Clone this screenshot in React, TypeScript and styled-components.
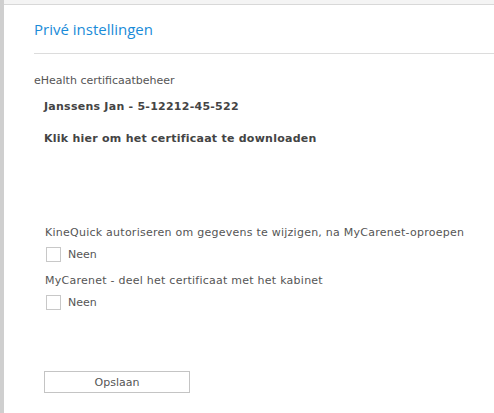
import styled, { createGlobalStyle } from 'styled-components';

//== global ==//
const GlobalStyle = createGlobalStyle`
    html, body {
        margin: 0;
        padding: 0;
        background: #f4f4f4;
    }
    body {
        font-family: "DejaVu Sans", Verdana, sans-serif;
        font-size: 11px;
        color: #555;
    }
`;

//== style ==//
const Page = styled.div`
    min-height: 413px;
    border-left: 4px solid #cfcfcf;
    padding-top: 4px;
    box-sizing: border-box;
    display: flex;
    flex-direction: column;
`;

const Panel = styled.div`
    flex: 1;
    background: #ffffff;
    border-top: 1px solid #d8d8d8;
    padding-left: 30px;
    padding-bottom: 20px;
`;

const Header = styled.div`
    height: 48px;
    display: flex;
    align-items: center;
    border-bottom: 1px solid #dcdcdc;
`;

const Title = styled.h1`
    margin: 0;
    font-family: "Open Sans", "Liberation Sans", sans-serif;
    font-size: 15px;
    font-weight: 400;
    color: #1a8bd8;
`;

const Section = styled.div`
    display: flex;
    flex-direction: column;
`;

const SectionTitle = styled.div`
    margin-top: 20px;
    line-height: 14px;
`;

const Label = styled.div<{ top?: number }>`
    margin-top: ${(p) => p.top ?? 0}px;
    padding-left: 11px;
    line-height: 14px;
    letter-spacing: 0.25px;
`;

const Strong = styled.div`
    margin-top: 12px;
    padding-left: 10px;
    line-height: 14px;
    font-weight: bold;
    letter-spacing: 0.25px;
    color: #444;
`;

const DownloadLink = styled.a`
    margin-top: 18px;
    padding-left: 10px;
    line-height: 14px;
    font-weight: bold;
    letter-spacing: 0.25px;
    color: #444;
    text-decoration: none;
    cursor: pointer;
`;

const CheckRow = styled.label`
    display: flex;
    align-items: center;
    gap: 7px;
    margin-top: 7px;
    padding-left: 12px;
    height: 14px;
`;

const Box = styled.span`
    width: 13px;
    height: 13px;
    border: 1px solid #c8c8c8;
    background: #fff;
    display: inline-block;
`;

const SaveButton = styled.button`
    margin-top: 62px;
    margin-left: 10px;
    width: 146px;
    height: 22px;
    background: #fff;
    border: 1px solid #c4c4c4;
    font-family: "DejaVu Sans", Verdana, sans-serif;
    font-size: 11px;
    color: #555;
    padding: 0;
    cursor: pointer;
`;

//== component ==//
const Option = ({ label, top }: { label: string; top: number }) => (
    <>
        <Label top={top}>{label}</Label>
        <CheckRow>
            <Box />
            Neen
        </CheckRow>
    </>
);

export default function App() {
    return (
        <>
            <GlobalStyle />
            <Page>
                <Panel>
                    <Header>
                        <Title>Privé instellingen</Title>
                    </Header>
                    <Section>
                        <SectionTitle>eHealth certificaatbeheer</SectionTitle>
                        <Strong>Janssens Jan - 5-12212-45-522</Strong>
                        <DownloadLink>Klik hier om het certificaat te downloaden</DownloadLink>
                        <Option label="KineQuick autoriseren om gegevens te wijzigen, na MyCarenet-oproepen" top={80} />
                        <Option label="MyCarenet - deel het certificaat met het kabinet" top={13} />
                    </Section>
                    <SaveButton>Opslaan</SaveButton>
                </Panel>
            </Page>
        </>
    );
}
